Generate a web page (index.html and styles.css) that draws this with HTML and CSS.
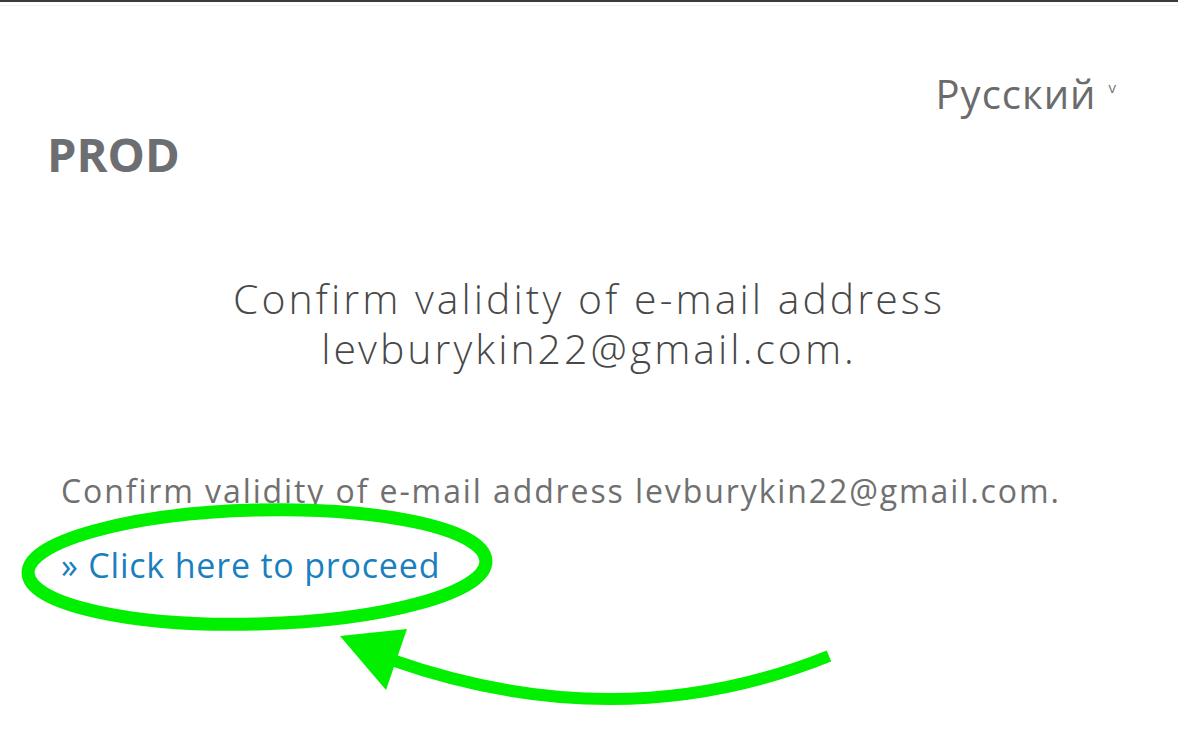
FILE: index.html
```html
<!DOCTYPE html>
<html>
  <head>
    <title>PROD</title>
    <link rel="stylesheet" href="styles.css">
  </head>
  <body>
    <div class="topbar"></div>
    <div class="header">
      <div class="lang">
        <span class="lang-name">Русский</span>
        <span class="lang-caret">v</span>
      </div>
      <div class="site-title">PROD</div>
    </div>

    <div class="content">
      <h1>Confirm validity of e-mail address<br />levburykin22@gmail.com.</h1>
      <p class="message">Confirm validity of e-mail address levburykin22@gmail.com.</p>
      <a class="proceed" href="#">» Click here to proceed</a>
    </div>

    <!-- annotation drawn over the page -->
    <svg class="markup" width="1178" height="738" viewBox="0 0 1178 738">
      <ellipse cx="257" cy="567" rx="229" ry="57" transform="rotate(-1.5 257 567)" />
      <path d="M 829 656 Q 620 740 392 660" />
      <polygon points="340,636 407,629 386,690" />
    </svg>
  </body>
</html>
```

FILE: styles.css
```css
body {
  margin: 0;
  font-family: "Open Sans", "Noto Sans", sans-serif;
  background: #fff;
  width: 1178px;
  height: 738px;
  overflow: hidden;
  position: relative;
}
.topbar {
  border-top: 2px solid #3a3a3a;
  border-bottom: 1px solid #f1f1f1;
  height: 3px;
}
.header {
  padding: 0 62px 0 47px;
}
.lang {
  display: flex;
  justify-content: flex-end;
  align-items: flex-start;
  margin-top: 64px;
  height: 48px;
}
.lang-name {
  font-size: 40px;
  line-height: 48px;
  letter-spacing: 1px;
  color: #6b6b6b;
}
.lang-caret {
  font-size: 15px;
  line-height: 15px;
  color: #777;
  margin: 10px 0 0 12px;
}
.site-title {
  margin-top: 8px;
  font-size: 47px;
  line-height: 56px;
  font-weight: 700;
  color: #6d6e72;
}
.content {
  padding: 0 61px;
}
h1 {
  margin: 91px 0 0;
  text-align: center;
  font-family: "Open Sans Light", "Open Sans", sans-serif;
  font-size: 41px;
  line-height: 50px;
  font-weight: 300;
  letter-spacing: 3px;
  color: #484848;
}
.message {
  margin: 98px 0 0;
  font-size: 32px;
  line-height: 40px;
  letter-spacing: 1.9px;
  color: #707070;
}
.proceed {
  display: block;
  margin-top: 32px;
  font-size: 34px;
  line-height: 44px;
  letter-spacing: 0.8px;
  color: #1b7fbd;
  text-decoration: none;
}
.markup {
  position: absolute;
  top: 0;
  left: 0;
  pointer-events: none;
}
.markup ellipse,
.markup path {
  fill: none;
  stroke: #00f000;
  stroke-width: 13;
}
.markup path {
  stroke-width: 12;
}
.markup polygon {
  fill: #00f000;
}
```
